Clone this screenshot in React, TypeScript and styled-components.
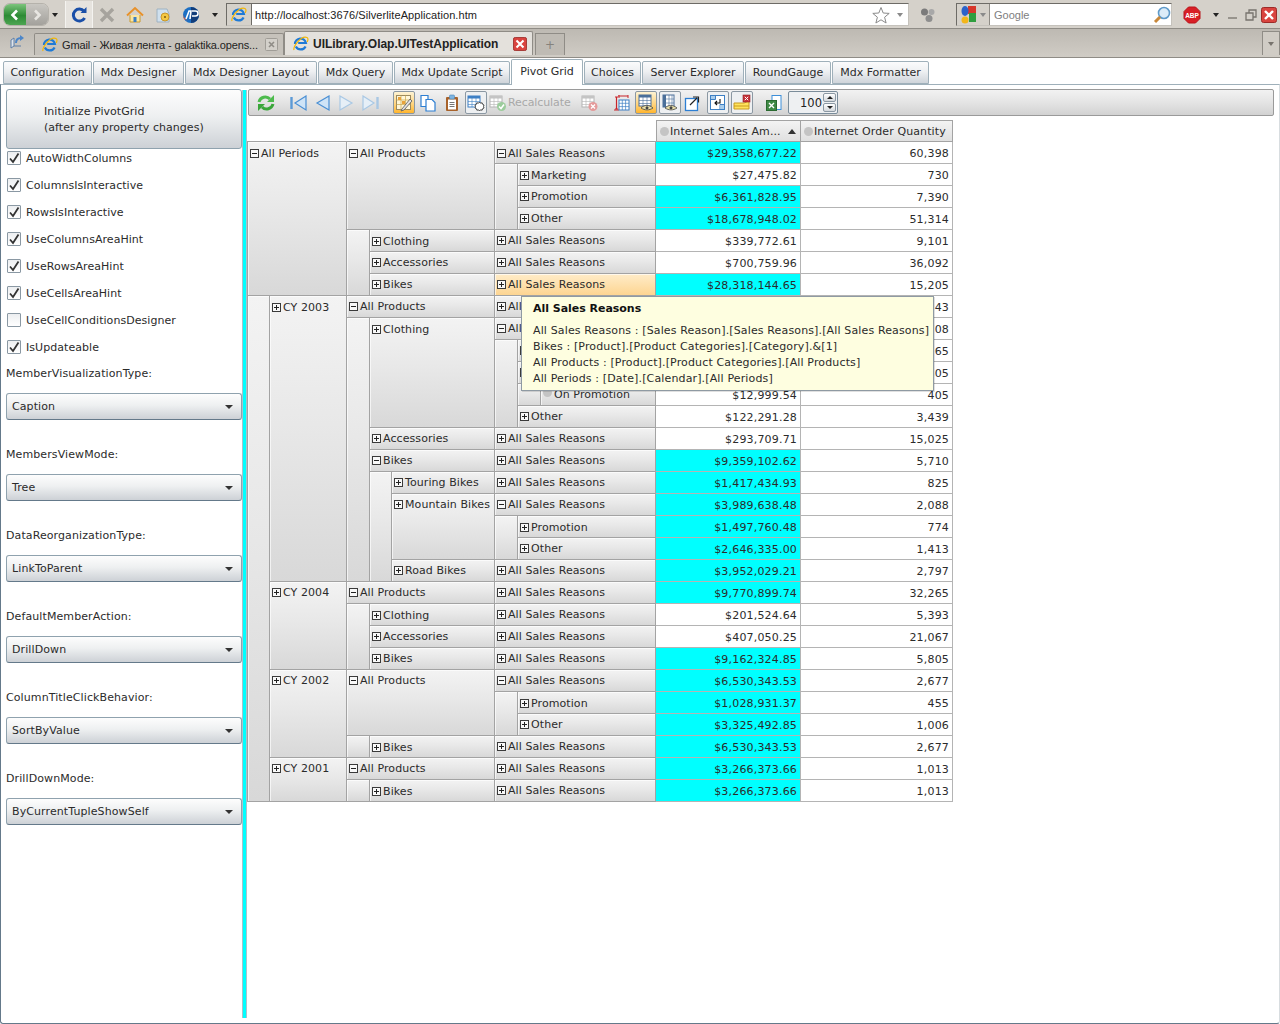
import React from "react";
import styled, { createGlobalStyle } from "styled-components";

const Global = createGlobalStyle`
  html, body { margin: 0; padding: 0; background: #fff; overflow: hidden; }
  body { font-family: "DejaVu Sans", Verdana, sans-serif; font-size: 11px; color: #2b2b2b; }
  * { box-sizing: border-box; }
  svg { flex: none; }
`;

const Root = styled.div`display:flex;flex-direction:column;width:1280px;height:1024px;overflow:hidden;`;

/* ---------- browser chrome ---------- */
const BrowserBar = styled.div`
  display:flex;align-items:center;height:29px;padding:1px 0 0 3px;background:#d5d1ca;border-bottom:1px solid #8f8c86;
`;
const Slot = styled.div<{ $w: number; $ml?: number }>`
  display:flex;align-items:center;justify-content:center;flex:none;width:${p => p.$w}px;height:24px;margin-left:${p => p.$ml ?? 0}px;
`;
const RefreshSlot = styled(Slot)`background:#e6e3de;height:27px;border-left:1px solid #f4f3f0;border-right:1px solid #f4f3f0;`;
const NavPill = styled.div`display:flex;flex:none;width:46px;height:23px;border-radius:7px;overflow:hidden;border:1px solid #b5b2ab;`;
const NavHalf = styled.div<{ $on?: boolean }>`
  display:flex;align-items:center;justify-content:center;flex:${p => p.$on ? "0 0 22px" : "1"};
  background:${p => p.$on ? "linear-gradient(#7cc47c,#2d8b35 55%,#4da552)" : "linear-gradient(#c9c7c2,#a3a19c)"};
`;
const Address = styled.div`
  display:flex;align-items:center;flex:none;width:683px;height:23px;margin-left:1px;background:#fff;border:1px solid #6d6b66;border-bottom-color:#c5c2bc;border-right-color:#c5c2bc;
`;
const AddressIcon = styled.div`display:flex;align-items:center;justify-content:center;flex:none;width:25px;height:21px;background:#d5d1ca;border-right:1px solid #6d6b66;`;
const AddressText = styled.div`flex:1;padding-left:3px;font-family:"Liberation Sans",Arial,sans-serif;font-size:11px;letter-spacing:.08px;color:#222;`;
const SearchBox = styled.div`
  display:flex;align-items:center;flex:none;width:216px;height:23px;background:#fff;border:1px solid #6d6b66;border-bottom-color:#c5c2bc;border-right-color:#c5c2bc;
`;
const SearchEngine = styled.div`display:flex;align-items:center;flex:none;width:33px;height:21px;padding-left:3px;gap:3px;background:#d5d1ca;border-right:1px solid #8f8c86;`;
const SearchText = styled.div`flex:1;padding-left:4px;font-family:"Liberation Sans",Arial,sans-serif;font-size:11px;color:#808080;`;
const Caret = styled.span<{ $c?: string }>`
  display:block;width:0;height:0;border-left:3px solid transparent;border-right:3px solid transparent;border-top:4px solid ${p => p.$c ?? "#222"};
`;
const TabsBar = styled.div`
  display:flex;align-items:flex-end;height:29px;padding:0 0 2px 0;background:linear-gradient(#bdb9b2,#d0ccc5);border-bottom:1px solid #8f8c86;
`;
const BrowserTab = styled.div<{ $w: number; $on?: boolean }>`
  display:flex;align-items:center;flex:none;width:${p => p.$w}px;height:${p => p.$on ? 24 : 22}px;padding:0 5px 0 ${p => p.$on ? 8 : 7}px;gap:4px;
  background:${p => p.$on ? "#e4e1dc" : "#c6c2bb"};border:1px solid #8f8c86;border-bottom:none;border-radius:2px 2px 0 0;
  font-family:"Liberation Sans",Arial,sans-serif;font-size:${p => p.$on ? 12 : 11}px;font-weight:${p => p.$on ? 700 : 400};letter-spacing:${p => p.$on ? "-.03px" : "-.12px"};color:#222;white-space:nowrap;
`;
const TabTitle = styled.span`flex:1;`;
const NewTab = styled.div`
  display:flex;align-items:center;justify-content:center;flex:none;width:30px;height:22px;margin-left:2px;border:1px solid #8f8c86;border-bottom:none;background:#bfbbb4;color:#85827c;font-size:12px;
`;
const TabsEnd = styled.div`display:flex;align-items:center;justify-content:center;flex:none;width:18px;height:24px;margin-left:auto;border:1px solid #8f8c86;border-bottom:none;background:#d0ccc5;`;

/* ---------- silverlight tabs ---------- */
const Page = styled.div`flex:1;display:flex;flex-direction:column;min-height:0;`;
const TabStrip = styled.div`display:flex;align-items:flex-end;height:26px;padding-left:3px;gap:1px;`;
const SlTab = styled.div<{ $w: number; $on?: boolean }>`
  display:flex;align-items:center;justify-content:center;flex:none;width:${p => p.$w}px;height:${p => p.$on ? 26 : 23}px;
  margin-bottom:${p => p.$on ? -1 : 0}px;position:relative;white-space:nowrap;
  padding-bottom:${p => p.$on ? 3 : 0}px;letter-spacing:-.03px;
  background:${p => p.$on ? "#fff" : "linear-gradient(#fbfbfc,#eef0f2 45%,#cfd4da)"};
  border:1px solid #9fb0ba;border-bottom:${p => p.$on ? "none" : "1px solid #9fb0ba"};border-radius:2px 2px 0 0;color:#2b2b2b;
`;
const Panel = styled.div`
  flex:1;display:flex;min-height:0;padding:4px 0 5px 5px;border:1px solid #64798a;border-top-color:#9fb0ba;border-right-color:#d8dde0;border-radius:0 0 3px 3px;
`;
const Sidebar = styled.aside`display:flex;flex-direction:column;flex:none;width:236px;`;
const InitButton = styled.div`
  flex:none;height:60px;margin-bottom:2px;padding:14px 0 0 37px;line-height:16px;letter-spacing:.04px;
  background:linear-gradient(#fdfdfd,#eef0f1 45%,#cdd1d6);border:1px solid #8fa2ae;border-radius:3px;
`;
const CheckRow = styled.label`display:flex;align-items:center;flex:none;height:14px;margin-bottom:13px;margin-left:1px;gap:5px;letter-spacing:.05px;`;
const CheckBox = styled.span`
  display:flex;align-items:center;justify-content:center;flex:none;width:14px;height:14px;
  background:linear-gradient(#eceef0,#fff);border:1px solid #8a98a3;border-radius:1px;
`;
const FieldLabel = styled.div`flex:none;height:14px;line-height:14px;letter-spacing:.1px;margin-bottom:12px;`;
const Select = styled.div`
  display:flex;align-items:center;justify-content:space-between;flex:none;height:27px;margin-bottom:28px;padding:0 8px 0 5px;
  background:linear-gradient(#fdfdfd,#eef0f1 45%,#cdd1d6);border:1px solid #8fa2ae;border-bottom-color:#64798a;border-radius:3px;letter-spacing:.1px;
`;
const SelectCaret = styled.span`display:block;width:0;height:0;border-left:4px solid transparent;border-right:4px solid transparent;border-top:4px solid #333;`;
const Splitter = styled.div`flex:none;width:5px;margin-top:1px;background:#00ffff;border-left:1px solid #a9c3cc;border-right:1px solid #a9c3cc;`;
const Main = styled.main`flex:1;display:flex;flex-direction:column;min-width:0;padding-right:5px;`;

/* ---------- toolbar ---------- */
const ToolBar = styled.div`
  display:flex;align-items:center;flex:none;height:27px;margin-left:1px;padding-left:6px;
  background:linear-gradient(#f2f2f2,#e4e4e4 50%,#d2d2d2);border:1px solid #9a9a9a;border-radius:2px;
`;
const Tool = styled.div<{ $ml: number; $on?: boolean; $boxed?: boolean }>`
  display:flex;align-items:center;justify-content:center;flex:none;width:22px;height:23px;margin-left:${p => p.$ml}px;
  border:1px solid ${p => p.$on || p.$boxed ? "#8b98a3" : "transparent"};border-radius:2px;
  background:${p => p.$on ? "linear-gradient(#fdf3d4,#ffd27a 60%,#ffb52e)" : p.$boxed ? "#eef0f2" : "transparent"};
`;
const Recalc = styled.div<{ $ml: number }>`
  display:flex;align-items:center;flex:none;width:84px;margin-left:${p => p.$ml}px;gap:1px;color:#a8a8a8;letter-spacing:-.1px;
`;
const Spin = styled.div<{ $ml: number }>`
  display:flex;align-items:center;justify-content:flex-end;flex:none;width:50px;height:23px;margin-left:${p => p.$ml}px;gap:1px;padding-right:1px;
  background:#eef0f2;border:1px solid #7a8c9a;border-radius:2px;color:#222;font-size:11.5px;
`;
const SpinBtns = styled.div`display:flex;flex-direction:column;gap:1px;`;
const SpinBtn = styled.div`display:flex;align-items:center;justify-content:center;width:13px;height:9px;background:linear-gradient(#fff,#d4d8dc);border:1px solid #8b98a3;border-radius:2px;`;
const SpinUp = styled.span`width:0;height:0;border-left:3px solid transparent;border-right:3px solid transparent;border-bottom:3px solid #222;`;
const SpinDown = styled.span`width:0;height:0;border-left:3px solid transparent;border-right:3px solid transparent;border-top:3px solid #222;`;

/* ---------- pivot grid ---------- */
const GridWrap = styled.div`position:relative;flex:none;width:706px;margin-top:4px;`;
const Grid = styled.div`
  display:grid;
  grid-template-columns:23px 77px 23px 22px 103px 23px 23px 115px 145px 152px;
  grid-template-rows:repeat(31,22px);
`;
const HeadCell = styled.div<{ $c1: number; $c2: number; $r: number; $n: number; $hot?: boolean; $low?: boolean }>`
  grid-column:${p => p.$c1} / ${p => p.$c2};
  grid-row:${p => p.$r + 2} / span ${p => p.$n};
  display:flex;align-items:flex-start;padding:${p => p.$low ? 4 : 3}px 0 0 2px;gap:2px;line-height:15px;white-space:nowrap;overflow:hidden;letter-spacing:.08px;
  background:${p => p.$hot ? "linear-gradient(#ffecc8,#fdd592)" : "linear-gradient(#f3f3f3,#e8e8e8 45%,#d8d8d8)"};
  border-right:1px solid #a3a3a3;border-bottom:1px solid #a3a3a3;
  ${p => p.$c1 === 1 ? "border-left:1px solid #a3a3a3;" : ""}
  box-shadow:inset 1px 1px 0 rgba(255,255,255,.65);
`;
const Corner = styled.div`grid-column:1 / 9;grid-row:1;border-bottom:1px solid #a3a3a3;`;
const ColHead = styled.div<{ $c: number }>`
  grid-column:${p => p.$c};grid-row:1;display:flex;align-items:center;padding:0 0 0 3px;gap:1px;white-space:nowrap;letter-spacing:.1px;
  background:linear-gradient(#f3f3f3,#e0e0e0);border:1px solid #a3a3a3;border-left-width:${p => p.$c === 9 ? 1 : 0}px;
`;
const Dot = styled.span`flex:none;width:9px;height:9px;margin-top:1px;border-radius:50%;background:#c4c4c4;`;
const SortUp = styled.span`flex:none;margin-left:auto;margin-right:4px;width:0;height:0;border-left:4px solid transparent;border-right:4px solid transparent;border-bottom:5px solid #333;`;
const Value = styled.div<{ $c: number; $r: number; $hi?: boolean }>`
  grid-column:${p => p.$c};grid-row:${p => p.$r + 2};display:flex;align-items:center;justify-content:flex-end;padding:2px 3px 0 0;letter-spacing:.18px;
  background:${p => p.$hi ? "#00ffff" : "#fff"};border-right:1px solid #b4b4b4;border-bottom:1px solid #b4b4b4;
`;
const Expander = styled.span`
  display:flex;align-items:center;justify-content:center;flex:none;width:9px;height:9px;margin-top:3px;border:1px solid #3a3a3a;background:#f8f8f8;position:relative;
`;
const Bar = styled.span`display:block;width:5px;height:1px;background:#222;`;
const BarV = styled.span`position:absolute;left:3px;top:1px;width:1px;height:5px;background:#222;`;
const Tip = styled.div`
  position:absolute;left:274px;top:176px;width:413px;height:95px;padding:4px 0 0 11px;line-height:16px;white-space:nowrap;letter-spacing:.14px;
  background:#fefee0;border:1px solid #8f9aa3;box-shadow:1px 1px 0 rgba(0,0,0,.12);
`;
const TipTitle = styled.div`font-weight:700;color:#111;margin-bottom:6px;letter-spacing:-.03px;`;

/* ---------- icons ---------- */
const Ie = () => (
  <svg width="16" height="16" viewBox="0 0 16 16">
    <path d="M2 8a5.5 5.5 0 0 1 10.9-1H5.2M2.8 10.5A5.5 5.5 0 0 0 12.6 10.4" fill="none" stroke="#1f7ad6" strokeWidth="2.2" />
    <path d="M1 14C0 11 8-1 14 1.5c1.5.8 1 3 .2 4.5" fill="none" stroke="#f2b705" strokeWidth="1.2" />
  </svg>
);
const Chevron = ({ left, c }: { left?: boolean; c: string }) => (
  <svg width="10" height="12" viewBox="0 0 10 12"><path d={left ? "M7 1.5 2.5 6 7 10.5" : "M3 1.5 7.5 6 3 10.5"} fill="none" stroke={c} strokeWidth="2.6" /></svg>
);
const BrowserRefresh = () => (
  <svg width="18" height="18" viewBox="0 0 18 18"><path d="M14 5.2A6 6 0 1 0 14.6 12" fill="none" stroke="#1a4fa8" strokeWidth="3" /><path d="M10.5 7h6V1z" fill="#1a4fa8" /></svg>
);
const BigX = () => (
  <svg width="16" height="16" viewBox="0 0 16 16"><path d="M2 2 14 14M14 2 2 14" stroke="#a6a39d" strokeWidth="3.4" /></svg>
);
const Home = () => (
  <svg width="18" height="18" viewBox="0 0 18 18"><path d="M4 9v7h10V9" fill="#fbe6a2" stroke="#c99a2e" /><path d="M1 9.5 9 2l8 7.5" fill="none" stroke="#e8912a" strokeWidth="2" /><rect x="7.5" y="11" width="3" height="5" fill="#3d7fc4" /></svg>
);
const Jar = () => (
  <svg width="18" height="18" viewBox="0 0 18 18"><path d="M3 3h10l2 5v8H3z" fill="#cfe0ee" stroke="#9fb2c2" /><circle cx="11" cy="11" r="4" fill="#f5c842" stroke="#c9962a" /><circle cx="11" cy="11" r="1" fill="#7a5a10" /></svg>
);
const Globe = () => (
  <svg width="18" height="18" viewBox="0 0 18 18"><circle cx="9" cy="9" r="8" fill="#1c6fc4" /><path d="M9 1a8 8 0 0 1 0 16z" fill="#123d7a" /><path d="M4 13 7 5h2l-1 8M10 5h3.5a2 2 0 0 1 0 5H10" fill="none" stroke="#fff" strokeWidth="1.6" /><path d="M1 8c1 4 3 6 5 7L2 13z" fill="#e9532b" /></svg>
);
const Star = () => (
  <svg width="18" height="18" viewBox="0 0 18 18"><path d="M9 1.5 11.2 7l6 .4-4.6 3.8 1.5 5.8L9 13.8 3.9 17l1.5-5.8L.8 7.4l6-.4z" fill="#fff" stroke="#8a8a8a" /></svg>
);
const Bubbles = () => (
  <svg width="16" height="16" viewBox="0 0 16 16"><circle cx="4.5" cy="5" r="3.5" fill="#7b7b7b" /><circle cx="11.5" cy="5" r="3" fill="#a8a8a8" /><circle cx="9" cy="11.5" r="3.5" fill="#8e8e8e" /></svg>
);
const GoogleLogo = () => (
  <svg width="17" height="19" viewBox="0 0 17 19"><rect x="8" y="1" width="8" height="8" fill="#d8372b" /><rect x="9" y="8" width="7" height="9" fill="#2f9e3f" /><ellipse cx="5" cy="6" rx="3.5" ry="5" fill="#2b62c9" /><circle cx="5" cy="15" r="3.5" fill="#f3b61a" /></svg>
);
const Magnifier = () => (
  <svg width="18" height="18" viewBox="0 0 18 18"><circle cx="11" cy="7" r="5.5" fill="#dcecf8" stroke="#5f9ac9" strokeWidth="1.6" /><path d="M7 11 2 16" stroke="#c8873a" strokeWidth="3" /></svg>
);
const Abp = () => (
  <svg width="18" height="18" viewBox="0 0 18 18">
    <path d="M5.5 1h7L17 5.5v7L12.5 17h-7L1 12.5v-7z" fill="#d81f26" stroke="#b8141a" />
    <text x="9" y="11.5" textAnchor="middle" fontFamily="Liberation Sans" fontWeight="700" fontSize="6.5" fill="#fff">ABP</text>
  </svg>
);
const CloseRed = ({ s }: { s: number }) => (
  <svg width={s} height={s} viewBox="0 0 16 16"><rect x=".5" y=".5" width="15" height="15" rx="2" fill="#d9443f" stroke="#9c2b28" /><path d="M4 4 12 12M12 4 4 12" stroke="#fff" strokeWidth="2.4" /></svg>
);
const CloseGrey = () => (
  <svg width="13" height="13" viewBox="0 0 13 13"><rect x=".5" y=".5" width="12" height="12" rx="1" fill="#d3d0ca" stroke="#a09d97" /><path d="M4 4 9 9M9 4 4 9" stroke="#8f8c86" strokeWidth="1.6" /></svg>
);
const Win = ({ d }: { d: string }) => (
  <svg width="12" height="12" viewBox="0 0 12 12"><path d={d} fill="none" stroke="#77736d" strokeWidth="1.3" /></svg>
);
const Restore = () => (
  <svg width="18" height="18" viewBox="0 0 18 18"><path d="M3 14V6l3-2v8zM6 12h7" fill="#dfe4ea" stroke="#5f7fa6" /><path d="M8 9c0-3 2-5 5-5" fill="none" stroke="#4d86c8" strokeWidth="2" /><path d="M12 1l4 3-4 3z" fill="#4d86c8" /></svg>
);

const S = ({ children, w = 18 }: { children: React.ReactNode; w?: number }) => (
  <svg width={w} height="18" viewBox={`0 0 ${w} 18`}>{children}</svg>
);
const MiniGrid = ({ x = 2, y = 2, c = "#3d7fc4", top = "#3d7fc4" }: { x?: number; y?: number; c?: string; top?: string }) => (
  <g>
    <rect x={x} y={y} width="12" height="11" fill="#fff" stroke={c} />
    <rect x={x} y={y} width="12" height="2.5" fill={top} />
    <path d={`M${x + 4} ${y + 2}v9M${x + 8} ${y + 2}v9M${x} ${y + 5.5}h12M${x} ${y + 8.5}h12`} stroke={c} strokeWidth=".6" />
  </g>
);
const Eye = () => (
  <g><path d="M4 14c3.5-3.5 8-3.5 12 0-4 2.5-8 2.5-12 0z" fill="#e9dfa8" stroke="#444" strokeWidth=".8" /><circle cx="10" cy="13.7" r="1.5" fill="#444" /></g>
);
const ToolIcons: Record<string, React.ReactNode> = {
  refresh: <S w={20}><path d="M3 8a6.5 6.5 0 0 1 11-3" fill="none" stroke="#4dbb4d" strokeWidth="3" /><path d="M11 8h7V1z" fill="#4dbb4d" /><path d="M17 10a6.5 6.5 0 0 1-11 3" fill="none" stroke="#3aa63a" strokeWidth="3" /><path d="M9 10H2v7z" fill="#3aa63a" /></S>,
  first: <S><path d="M2.5 3v12" stroke="#5c9ad6" strokeWidth="2.4" /><path d="M17 2 6 9l11 7z" fill="#cfe4f7" stroke="#4a8fd4" strokeWidth="1.2" /></S>,
  prev: <S><path d="M15 2 3 9l12 7z" fill="#cfe4f7" stroke="#4a8fd4" strokeWidth="1.2" /></S>,
  next: <S><path d="M3 2l12 7-12 7z" fill="#e6eff7" stroke="#a9c8e4" strokeWidth="1.2" /></S>,
  last: <S><path d="M15.5 3v12" stroke="#a9c8e4" strokeWidth="2.4" /><path d="M1 2l11 7-11 7z" fill="#e6eff7" stroke="#a9c8e4" strokeWidth="1.2" /></S>,
  design: <S><rect x="1.5" y="1.5" width="14" height="14" fill="#fff6d8" stroke="#9a8a60" /><path d="M1.5 6h14M1.5 10.5h14M6 1.5v14M10.5 1.5v14" stroke="#c9a84a" strokeWidth=".7" /><rect x="3" y="3" width="3" height="3" fill="#e8a23a" /><rect x="7" y="7" width="3" height="3" fill="#e8a23a" /><path d="M7 15 15 5l2 2-8 9-3 1z" fill="#e2e2e2" stroke="#555" strokeWidth=".8" /></S>,
  copy: <S><path d="M2 1.5h7l0 11H2z" fill="#fff" stroke="#2d7fd3" strokeWidth="1.2" /><path d="M7 5.5h6l3 3v8.5H7z" fill="#fff" stroke="#2d7fd3" strokeWidth="1.2" /></S>,
  paste: <S><rect x="3" y="3" width="12" height="14" rx="1" fill="#a8622a" /><rect x="5" y="5.5" width="8" height="10" fill="#fff" /><rect x="6.5" y="1" width="5" height="4" rx="1" fill="#7db4e0" stroke="#4a86bb" strokeWidth=".6" /><path d="M6.5 8.5h5M6.5 10.5h5M6.5 12.5h5" stroke="#777" /></S>,
  settings: <S><MiniGrid x={1} y={2} /><path d="M12.5 8l1 1.2 1.6-.4.5 1.5 1.4.7-.5 1.5.5 1.5-1.4.7-.5 1.5-1.6-.4-1 1.2-1-1.2-1.6.4-.5-1.5-1.4-.7.5-1.5-.5-1.5 1.4-.7.5-1.5 1.6.4z" fill="#fff" stroke="#333" strokeWidth=".9" /></S>,
  recalc: <S><MiniGrid x={1} y={2} c="#b4b4b4" top="#c4c4c4" /><circle cx="12.5" cy="12.5" r="4.5" fill="#9ccc9c" /><path d="M10 12.5l2 2 3-4" fill="none" stroke="#fff" strokeWidth="1.5" /></S>,
  cancel: <S><MiniGrid x={1} y={2} c="#b4b4b4" top="#c4c4c4" /><circle cx="12" cy="12.5" r="4.5" fill="#e49a9a" /><path d="M10 10.5l4 4M14 10.5l-4 4" stroke="#fff" strokeWidth="1.3" /></S>,
  ruler: <S><path d="M5 2h10M1 16h5M3.5 3v12" stroke="#c8242a" strokeWidth="1.2" fill="none" /><path d="M15 1v3M6 1v3M2 3h3M2 15h3" stroke="#c8242a" /><rect x="6" y="6" width="10" height="10" fill="#fff" stroke="#3d7fc4" /><path d="M9.3 6v10M12.6 6v10M6 9.3h10M6 12.6h10" stroke="#3d7fc4" strokeWidth=".7" /></S>,
  eyeRow: <S><MiniGrid x={2} y={1} c="#4a6f9a" top="#4a6f9a" /><Eye /></S>,
  eyeCol: <S><rect x="2" y="1" width="11" height="12" fill="#fff" stroke="#4a6f9a" /><rect x="2" y="1" width="3" height="12" fill="#4a6f9a" /><path d="M8 1v12M11 1v12M2 5h11M2 9h11" stroke="#4a6f9a" strokeWidth=".6" /><Eye /></S>,
  popout: <S><rect x="1.5" y="4.5" width="12" height="12" fill="#fff" stroke="#2d7fd3" strokeWidth="1.3" /><path d="M6 11 13 4M9 3h5.5v5.5" fill="none" stroke="#222" strokeWidth="1.2" /></S>,
  swap: <S><rect x="1.5" y="1.5" width="14" height="14" fill="#fff" stroke="#3d7fc4" /><path d="M1.5 5.5h5v-4M11 15.5v-5h4.5" fill="none" stroke="#3d7fc4" /><rect x="2" y="2" width="4" height="3" fill="#a9cdec" /><rect x="11.5" y="11" width="3.5" height="4" fill="#a9cdec" /><path d="M11 5v4H6M8 7 6 9l2 2" fill="none" stroke="#111" strokeWidth="1.1" /></S>,
  folderX: <S><path d="M1 15V9h10l5-2v8z" fill="#ffe45c" stroke="#c99a1e" /><path d="M1 12h15" stroke="#c99a1e" /><rect x="10" y="1" width="7" height="7" fill="#c8323a" stroke="#8e2025" strokeWidth=".6" /><path d="M11.8 2.8 15.2 6.2M15.2 2.8 11.8 6.2" stroke="#fff" /></S>,
  excel: <S><rect x="7" y="1.5" width="9" height="14" fill="#fff" stroke="#3d8fd9" /><rect x="1.5" y="6.5" width="10" height="10" fill="#3f8a45" stroke="#2b6a31" /><path d="M4 9l5 5M9 9l-5 5" stroke="#fff" strokeWidth="1.4" /></S>,
};
const tools: { i: string; ml: number; on?: boolean; boxed?: boolean }[] = [
  { i: "refresh", ml: 0 }, { i: "first", ml: 10 }, { i: "prev", ml: 3 }, { i: "next", ml: 1 }, { i: "last", ml: 3 },
  { i: "design", ml: 11, on: true }, { i: "copy", ml: 2 }, { i: "paste", ml: 2 }, { i: "settings", ml: 2, boxed: true },
];
const tools2: { i: string; ml: number; on?: boolean; boxed?: boolean }[] = [
  { i: "cancel", ml: 6 }, { i: "ruler", ml: 10 }, { i: "eyeRow", ml: 2, on: true }, { i: "eyeCol", ml: 2, boxed: true },
  { i: "popout", ml: 1 }, { i: "swap", ml: 3, boxed: true }, { i: "folderX", ml: 2, boxed: true }, { i: "excel", ml: 10 },
];

/* ---------- data ---------- */
const checks: [string, boolean][] = [
  ["AutoWidthColumns", true], ["ColumnsIsInteractive", true], ["RowsIsInteractive", true], ["UseColumnsAreaHint", true],
  ["UseRowsAreaHint", true], ["UseCellsAreaHint", true], ["UseCellConditionsDesigner", false], ["IsUpdateable", true],
];
const selects = [
  ["MemberVisualizationType:", "Caption"], ["MembersViewMode:", "Tree"], ["DataReorganizationType:", "LinkToParent"],
  ["DefaultMemberAction:", "DrillDown"], ["ColumnTitleClickBehavior:", "SortByValue"], ["DrillDownMode:", "ByCurrentTupleShowSelf"],
];
const slTabs: [string, number, boolean?][] = [
  ["Configuration", 89], ["Mdx Designer", 91], ["Mdx Designer Layout", 132], ["Mdx Query", 75], ["Mdx Update Script", 116],
  ["Pivot Grid", 72, true], ["Choices", 57], ["Server Explorer", 102], ["RoundGauge", 86], ["Mdx Formatter", 97],
];
type C = [string, number, number, number, number, "+" | "-" | "o" | "", boolean?];
const ASR = "All Sales Reasons";
const cells: C[] = [
  ["All Periods", 1, 3, 0, 7, "-"], ["", 1, 2, 7, 23, ""],
  ["CY 2003", 2, 3, 7, 13, "+"], ["CY 2004", 2, 3, 20, 4, "+"], ["CY 2002", 2, 3, 24, 4, "+"], ["CY 2001", 2, 3, 28, 2, "+"],
  ["All Products", 3, 6, 0, 4, "-"], ["", 3, 4, 4, 3, ""], ["Clothing", 4, 6, 4, 1, "+"], ["Accessories", 4, 6, 5, 1, "+"], ["Bikes", 4, 6, 6, 1, "+"],
  ["All Products", 3, 6, 7, 1, "-"], ["", 3, 4, 8, 12, ""], ["Clothing", 4, 6, 8, 5, "+"], ["Accessories", 4, 6, 13, 1, "+"], ["Bikes", 4, 6, 14, 1, "-"],
  ["", 4, 5, 15, 5, ""], ["Touring Bikes", 5, 6, 15, 1, "+"], ["Mountain Bikes", 5, 6, 16, 3, "+"], ["Road Bikes", 5, 6, 19, 1, "+"],
  ["All Products", 3, 6, 20, 1, "-"], ["", 3, 4, 21, 3, ""], ["Clothing", 4, 6, 21, 1, "+"], ["Accessories", 4, 6, 22, 1, "+"], ["Bikes", 4, 6, 23, 1, "+"],
  ["All Products", 3, 6, 24, 3, "-"], ["", 3, 4, 27, 1, ""], ["Bikes", 4, 6, 27, 1, "+"],
  ["All Products", 3, 6, 28, 1, "-"], ["", 3, 4, 29, 1, ""], ["Bikes", 4, 6, 29, 1, "+"],
  [ASR, 6, 9, 0, 1, "-"], ["", 6, 7, 1, 3, ""], ["Marketing", 7, 9, 1, 1, "+"], ["Promotion", 7, 9, 2, 1, "+"], ["Other", 7, 9, 3, 1, "+"],
  [ASR, 6, 9, 4, 1, "+"], [ASR, 6, 9, 5, 1, "+"], [ASR, 6, 9, 6, 1, "+", true], [ASR, 6, 9, 7, 1, "+"], [ASR, 6, 9, 8, 1, "-"],
  ["", 6, 7, 9, 4, ""], ["Marketing", 7, 9, 9, 1, "+"], ["Promotion", 7, 9, 10, 1, "-"], ["", 7, 8, 11, 1, ""], ["On Promotion", 8, 9, 11, 1, "o"], ["Other", 7, 9, 12, 1, "+"],
  [ASR, 6, 9, 13, 1, "+"], [ASR, 6, 9, 14, 1, "+"], [ASR, 6, 9, 15, 1, "+"], [ASR, 6, 9, 16, 1, "-"], ["", 6, 7, 17, 2, ""], ["Promotion", 7, 9, 17, 1, "+"], ["Other", 7, 9, 18, 1, "+"],
  [ASR, 6, 9, 19, 1, "+"], [ASR, 6, 9, 20, 1, "+"], [ASR, 6, 9, 21, 1, "+"], [ASR, 6, 9, 22, 1, "+"], [ASR, 6, 9, 23, 1, "+"],
  [ASR, 6, 9, 24, 1, "-"], ["", 6, 7, 25, 2, ""], ["Promotion", 7, 9, 25, 1, "+"], ["Other", 7, 9, 26, 1, "+"],
  [ASR, 6, 9, 27, 1, "+"], [ASR, 6, 9, 28, 1, "+"], [ASR, 6, 9, 29, 1, "+"],
];
const sitsLower = (t: string, r: number) =>
  r < 2 || t === "Clothing" || t === "CY 2003" || (t === "Bikes" && r >= 27) || (t === "Promotion" && r >= 17);
const values: [string, string, boolean][] = [
  ["$29,358,677.22", "60,398", true], ["$27,475.82", "730", false], ["$6,361,828.95", "7,390", true], ["$18,678,948.02", "51,314", true],
  ["$339,772.61", "9,101", false], ["$700,759.96", "36,092", false], ["$28,318,144.65", "15,205", true], ["$9,791,060.30", "28,143", true],
  ["$138,247.08", "8,708", false], ["$3,399.65", "65", false], ["$15,105.05", "1,305", false], ["$12,999.54", "405", false],
  ["$122,291.28", "3,439", false], ["$293,709.71", "15,025", false], ["$9,359,102.62", "5,710", true], ["$1,417,434.93", "825", true],
  ["$3,989,638.48", "2,088", true], ["$1,497,760.48", "774", true], ["$2,646,335.00", "1,413", true], ["$3,952,029.21", "2,797", true],
  ["$9,770,899.74", "32,265", true], ["$201,524.64", "5,393", false], ["$407,050.25", "21,067", false], ["$9,162,324.85", "5,805", true],
  ["$6,530,343.53", "2,677", true], ["$1,028,931.37", "455", true], ["$3,325,492.85", "1,006", true], ["$6,530,343.53", "2,677", true],
  ["$3,266,373.66", "1,013", true], ["$3,266,373.66", "1,013", true],
];

const Mark = ({ k }: { k: C[5] }) => {
  if (k === "") return null;
  if (k === "o") return <Dot />;
  return <Expander><Bar />{k === "+" && <BarV />}</Expander>;
};

export default function App() {
  return (
    <Root>
      <Global />
      <BrowserBar>
        <NavPill>
          <NavHalf $on><Chevron left c="#fff" /></NavHalf>
          <NavHalf><Chevron c="#e8e6e2" /></NavHalf>
        </NavPill>
        <Slot $w={11}><Caret /></Slot>
        <RefreshSlot $w={28} $ml={5}><BrowserRefresh /></RefreshSlot>
        <Slot $w={28}><BigX /></Slot>
        <Slot $w={28}><Home /></Slot>
        <Slot $w={28}><Jar /></Slot>
        <Slot $w={28}><Globe /></Slot>
        <Slot $w={20}><Caret /></Slot>
        <Address>
          <AddressIcon><Ie /></AddressIcon>
          <AddressText>http://localhost:3676/SilverliteApplication.htm</AddressText>
          <Slot $w={22}><Star /></Slot>
          <Slot $w={16}><Caret $c="#8a8a8a" /></Slot>
        </Address>
        <Slot $w={38}><Bubbles /></Slot>
        <Slot $w={9} />
        <SearchBox>
          <SearchEngine><GoogleLogo /><Caret $c="#8a8a8a" /></SearchEngine>
          <SearchText>Google</SearchText>
          <Slot $w={18}><Magnifier /></Slot>
        </SearchBox>
        <Slot $w={20} $ml={10}><Abp /></Slot>
        <Slot $w={12} $ml={8}><Caret /></Slot>
        <Slot $w={14} $ml={4}><Win d="M1 9h9" /></Slot>
        <Slot $w={14} $ml={4}><Win d="M1 4h7v7H1zM4 4V1h7v7H8" /></Slot>
        <Slot $w={16} $ml={3}><CloseRed s={16} /></Slot>
      </BrowserBar>
      <TabsBar>
        <Slot $w={34}><Restore /></Slot>
        <BrowserTab $w={250}><Ie /><TabTitle>Gmail - Живая лента - galaktika.opens...</TabTitle><CloseGrey /></BrowserTab>
        <BrowserTab $w={249} $on><Ie /><TabTitle>UILibrary.Olap.UITestApplication</TabTitle><CloseRed s={14} /></BrowserTab>
        <NewTab>+</NewTab>
        <TabsEnd><Caret $c="#77736d" /></TabsEnd>
      </TabsBar>
      <Page>
        <TabStrip>
          {slTabs.map(([t, w, on]) => <SlTab key={t} $w={w} $on={on}>{t}</SlTab>)}
        </TabStrip>
        <Panel>
          <Sidebar>
            <InitButton>Initialize PivotGrid<br />(after any property changes)</InitButton>
            {checks.map(([t, on]) => (
              <CheckRow key={t}>
                <CheckBox>
                  {on && <svg width="12" height="12" viewBox="0 0 12 12"><path d="M2 6.5 5 10 10.5 1.5" fill="none" stroke="#333" strokeWidth="1.8" /></svg>}
                </CheckBox>
                {t}
              </CheckRow>
            ))}
            {selects.map(([l, v]) => (
              <React.Fragment key={l}>
                <FieldLabel>{l}</FieldLabel>
                <Select>{v}<SelectCaret /></Select>
              </React.Fragment>
            ))}
          </Sidebar>
          <Splitter />
          <Main>
            <ToolBar>
              {tools.map(t => <Tool key={t.i} $ml={t.ml} $on={t.on} $boxed={t.boxed}>{ToolIcons[t.i]}</Tool>)}
              <Recalc $ml={2}>{ToolIcons.recalc}Recalculate</Recalc>
              {tools2.map(t => <Tool key={t.i} $ml={t.ml} $on={t.on} $boxed={t.boxed}>{ToolIcons[t.i]}</Tool>)}
              <Spin $ml={3}>100<SpinBtns><SpinBtn><SpinUp /></SpinBtn><SpinBtn><SpinDown /></SpinBtn></SpinBtns></Spin>
            </ToolBar>
            <GridWrap>
              <Grid>
                <Corner />
                <ColHead $c={9}><Dot />Internet Sales Am...<SortUp /></ColHead>
                <ColHead $c={10}><Dot />Internet Order Quantity</ColHead>
                {cells.map(([t, c1, c2, r, n, k, hot], i) => (
                  <HeadCell key={i} $c1={c1} $c2={c2} $r={r} $n={n} $hot={hot} $low={sitsLower(t, r)}><Mark k={k} />{t}</HeadCell>
                ))}
                {values.map(([a, b, hi], r) => (
                  <React.Fragment key={r}>
                    <Value $c={9} $r={r} $hi={hi}>{a}</Value>
                    <Value $c={10} $r={r}>{b}</Value>
                  </React.Fragment>
                ))}
              </Grid>
              <Tip>
                <TipTitle>All Sales Reasons</TipTitle>
                <div>All Sales Reasons : [Sales Reason].[Sales Reasons].[All Sales Reasons]</div>
                <div>Bikes : [Product].[Product Categories].[Category].&amp;[1]</div>
                <div>All Products : [Product].[Product Categories].[All Products]</div>
                <div>All Periods : [Date].[Calendar].[All Periods]</div>
              </Tip>
            </GridWrap>
          </Main>
        </Panel>
      </Page>
    </Root>
  );
}
